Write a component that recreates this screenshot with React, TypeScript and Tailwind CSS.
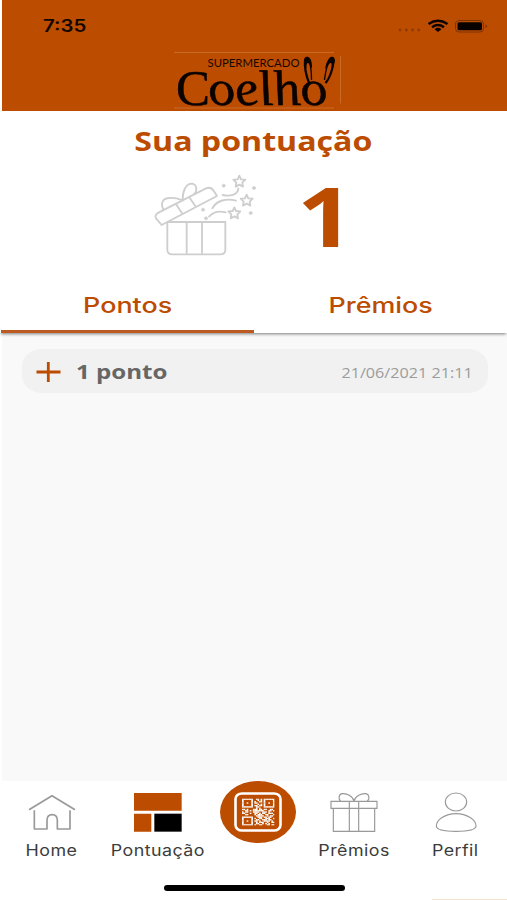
import type { ReactNode } from "react";

const QR_ROWS = [
  "1111111..11.1.1111111",
  "1.....1...1.1.1.....1",
  "1.....1.1..11.1.....1",
  "1..1..1.11....1..1..1",
  "1.....1...1.1.1.....1",
  "1.....1.11.11.1.....1",
  "1111111..11...1111111",
  ".........1.1.........",
  "11.1...111.11.11..11.",
  "..11.1.1111111...11.1",
  "1.11...1111..111.1...",
  "11...1..11.1.11..111.",
  "..11....1.111..11...1",
  ".........11111..1.11.",
  "1111111...111.11.11..",
  "1.....1.1..11..111..1",
  "1.....1..11..111.11..",
  "1..1..1.11.1..1111.1.",
  "1.....1..1.111..1..11",
  "1.....1..11..1.1.1...",
  "1111111.1..11...11.11",
];

function QrIcon() {
  return (
    <svg width="48" height="40" viewBox="0 0 48 40">
      <rect x="1.5" y="1.5" width="45" height="37" rx="6.5" ry="5.5" fill="none" stroke="#fff" strokeWidth="2.6" />
      <svg x="8" y="6.500" width="32.500" height="27" viewBox="0 0 21 21" preserveAspectRatio="none">
        {QR_ROWS.map((row, y) =>
          row.split("").map((cell, x) => (cell === "1" ? <rect key={`${x}-${y}`} x={x} y={y} width="1.08" height="1.08" fill="#fff" /> : null)),
        )}
      </svg>
    </svg>
  );
}

function Logo() {
  return (
    <svg width="172" height="58" viewBox="170 50 172 58" className="overflow-visible">
      <path d="M174 52.5H334M340.5 56V103.500M174 108H334" stroke="#c96a28" strokeWidth="1" fill="none" />
      <text x="207.500" y="67" fontSize="10.500" textLength="92" lengthAdjust="spacingAndGlyphs" className="font-['Lato']" fill="#160800">
        SUPERMERCADO
      </text>
      <text x="176" y="104.500" fontSize="51" textLength="34" lengthAdjust="spacingAndGlyphs" className="font-['Liberation_Serif']" fill="#0a0300" stroke="#0a0300" strokeWidth="0.5">
        C
      </text>
      <text
        transform="translate(211 104.500) skewX(13)"
        fontSize="50"
        textLength="119"
        lengthAdjust="spacingAndGlyphs"
        className="font-['Liberation_Serif'] italic"
        fill="#0a0300"
        stroke="#0a0300"
        strokeWidth="0.5"
      >
        oelho
      </text>
      <g fill="none" stroke="#0a0300">
        <path d="M309 83C306 75 304.500 65 305 60" strokeWidth="2.200" />
        <path d="M305 60C308 58 311.500 63 311.500 80" strokeWidth="1.300" />
        <path d="M325.500 83C330 78 333.500 67 333.500 60" strokeWidth="2.200" />
        <path d="M333.500 60C329 59 326 67 324.500 80" strokeWidth="1.300" />
      </g>
      <path d="M304 62C303.500 57.500 306 55.800 308.500 57C311.500 59 312.300 64 312 69C310.500 65 309 62.500 307.500 63C306.500 64 306.300 66 306.500 69Z" fill="#0a0300" />
      <path d="M334.800 62C335.500 57.500 333 55.800 330.500 57C327.500 59 325.500 65 325 69.500C327 65.500 329.500 62.500 331 63C332 64 331.800 67 331.500 70Z" fill="#0a0300" />
    </svg>
  );
}

const STAR = "M0-17L5-6L18-5L9 4L11 16L0 10L-11 16L-9 4L-18-5L-5-6Z";

function OpenGift() {
  return (
    <svg width="120" height="100" viewBox="0 0 360 300" fill="none" stroke="#cecece" strokeWidth="5.500" strokeLinecap="round" strokeLinejoin="round">
      <path d="M67 171H241V254Q241 268 225 268H83Q67 268 67 254ZM125 171V268M171 171V268" />
      <path d="M50 180L216 93L206 77Q198 64 183 70L42 142Q27 150 33 160ZM93 117L112 146M133 97L152 125" />
      <path d="M55 133C45 113 55 99 73 99C90 98 103 102 113 106C112 80 122 56 140 56C157 58 157 77 148 87" />
      <path d="M233 90C257 96 280 88 280 70M202 130C215 105 245 100 273 107M192 155C205 140 222 137 242 142" />
      <path d={STAR} transform="translate(283 49)" />
      <path d={STAR} transform="translate(305 106)" />
      <path d={STAR} transform="translate(268 144)" />
      <g fill="#cecece" strokeWidth="2">
        <circle cx="236" cy="62" r="4.500" />
        <circle cx="327" cy="69" r="4.500" />
        <circle cx="174" cy="134" r="4.500" />
        <circle cx="183" cy="160" r="4.500" />
        <circle cx="317" cy="144" r="4.500" />
      </g>
    </svg>
  );
}

function NavItem({ label, width, children }: { label: string; width: string; children: ReactNode }) {
  return (
    <div className={`flex flex-col items-center pt-[11px] ${width}`}>
      {children}
      <span className="mt-[6.5px] block scale-x-[1.15] whitespace-nowrap font-['Inter',sans-serif] text-[15.5px] leading-5 tracking-[0.4px] text-[#3c3c3c]">
        {label}
      </span>
    </div>
  );
}

export default function App() {
  return (
    <div className="flex h-[900px] w-[507px] flex-col overflow-hidden bg-white font-['Open_Sans',sans-serif]">
      <header className="ml-[1.5px] flex h-[111px] flex-col bg-[#bc4c00]">
        <div className="flex h-[50px] items-center justify-between pr-[19px] pl-[41px] pt-[2px]">
          <span className="origin-left translate-y-px scale-x-[1.2] font-['Inter',sans-serif] text-[17px] font-semibold text-[#120600]">7:35</span>
          <svg width="92" height="18" viewBox="396 17 92 18">
            <g fill="#913b02">
              <circle cx="400" cy="30" r="1.400" />
              <circle cx="406.300" cy="30" r="1.400" />
              <circle cx="412.500" cy="30" r="1.400" />
              <circle cx="418.800" cy="30" r="1.400" />
            </g>
            <g fill="none" stroke="#0c0400" strokeWidth="2.400">
              <path d="M428.500 24Q438 17.500 447.500 24" />
              <path d="M432 27.200Q438 22.800 444 27.200" />
            </g>
            <path d="M434.500 29.200Q438 26.500 441.500 29.200L438 32Z" fill="#0c0400" />
            <rect x="455.500" y="20.500" width="28" height="11.500" rx="3.500" fill="none" stroke="#7c3302" />
            <rect x="457.500" y="22.200" width="24.500" height="8" rx="1.500" fill="#080200" />
            <path d="M485.500 24.200Q488.500 26.200 485.500 28.200Z" fill="#7c3302" />
          </svg>
        </div>
        <div className="pl-[168.500px]">
          <Logo />
        </div>
      </header>

      <section className="flex h-[170px] flex-col items-center">
        <h1 className="mt-[12px] scale-x-[1.235] whitespace-nowrap text-[26px] leading-9 font-bold text-[#bc4c00]">Sua pontuação</h1>
        <div className="flex w-full pt-[6px] pl-[145px]">
          <OpenGift />
          <span className="-mt-[3px] ml-[31.5px] block origin-left scale-x-[1.2] text-[83px] leading-[105px] font-bold text-[#bc4c00]">1</span>
        </div>
      </section>

      <div className="z-10 flex h-[52px] bg-white pl-px font-['Inter',sans-serif] text-[21.5px] font-medium text-[#bc4c00] shadow-[0_2px_3px_-1px_rgba(0,0,0,0.5)]">
        <div className="flex w-[253px] justify-center border-b-[3px] border-[#bc5a22] pt-[8px]">
          <span className="scale-x-[1.25] leading-8">Pontos</span>
        </div>
        <div className="flex flex-1 justify-center pt-[8px]">
          <span className="scale-x-[1.25] leading-8">Prêmios</span>
        </div>
      </div>

      <main className="ml-[1.5px] h-[448px] bg-[#f9f9f9] pt-[16px] pr-[19px] pl-[20.500px]">
        <div className="flex h-[44px] items-center justify-between rounded-[20px/17px] bg-[#f1f1f1] pr-[15px] pl-[14px]">
          <div className="flex items-center">
            <svg width="25" height="20" viewBox="0 0 25 20" className="mt-px">
              <path d="M0.500 10H24.500M12.300 0V20" stroke="#bc4c00" strokeWidth="2.800" />
            </svg>
            <span className="mt-[2px] ml-[15px] origin-left scale-x-[1.235] text-[19.5px] leading-7 font-bold text-[#666]">1 ponto</span>
          </div>
          <span className="mt-[3px] origin-right scale-x-[1.155] text-[14px] leading-5 text-[#9c9c9c]">21/06/2021 21:11</span>
        </div>
      </main>

      <nav className="flex h-[104px] bg-white">
        <NavItem label="Home" width="w-[104px]">
          <svg width="50" height="42" viewBox="82 66 150 126" fill="none" stroke="#999" strokeWidth="5" strokeLinejoin="round">
            <path d="M88 119L157 77L226 119M104 121V177H142V151Q142 134 157.500 134Q173 134 173 151V177H211V121" />
          </svg>
        </NavItem>
        <NavItem label="Pontuação" width="w-[108px]">
          <svg width="50" height="42" viewBox="399 66 150 126">
            <path d="M402 69H545V122H402ZM402 131H454V185H402Z" fill="#bc4c00" />
            <path d="M463 131H545V185H463Z" fill="#000" />
          </svg>
        </NavItem>
        <div className="flex w-[92px] justify-center">
          <div className="flex h-[62px] w-[76px] items-center justify-center rounded-[50%] bg-[#bc4c00]">
            <QrIcon />
          </div>
        </div>
        <NavItem label="Prêmios" width="w-[100px]">
          <svg width="50" height="42" viewBox="359 66 150 126" fill="none" stroke="#999" strokeWidth="3.500">
            <path d="M365 94H503V115H365ZM372 115V184H496V115M420 94V184M448 94V184" />
            <path d="M434 93C430 78 412 69 398 71C387 74 387 87 394 93M434 93C438 78 456 69 470 71C481 74 481 87 474 93" />
          </svg>
        </NavItem>
        <NavItem label="Perfil" width="w-[103px]">
          <svg width="50" height="42" viewBox="663 66 150 126" fill="none" stroke="#999" strokeWidth="3.500">
            <ellipse cx="738" cy="96" rx="32" ry="27" />
            <path d="M679 168C679 150 705 131 738 131C771 131 798 150 798 168C798 180 770 184 738 184C706 184 679 180 679 168Z" />
          </svg>
        </NavItem>
      </nav>
      <footer className="flex h-[15px] shrink-0 flex-col items-center justify-between">
        <div className="ml-[2px] h-[6px] w-[181px] rounded-full bg-black" />
        <div className="h-px w-[75px] self-end bg-[#f3e3cf]" />
      </footer>
    </div>
  );
}
